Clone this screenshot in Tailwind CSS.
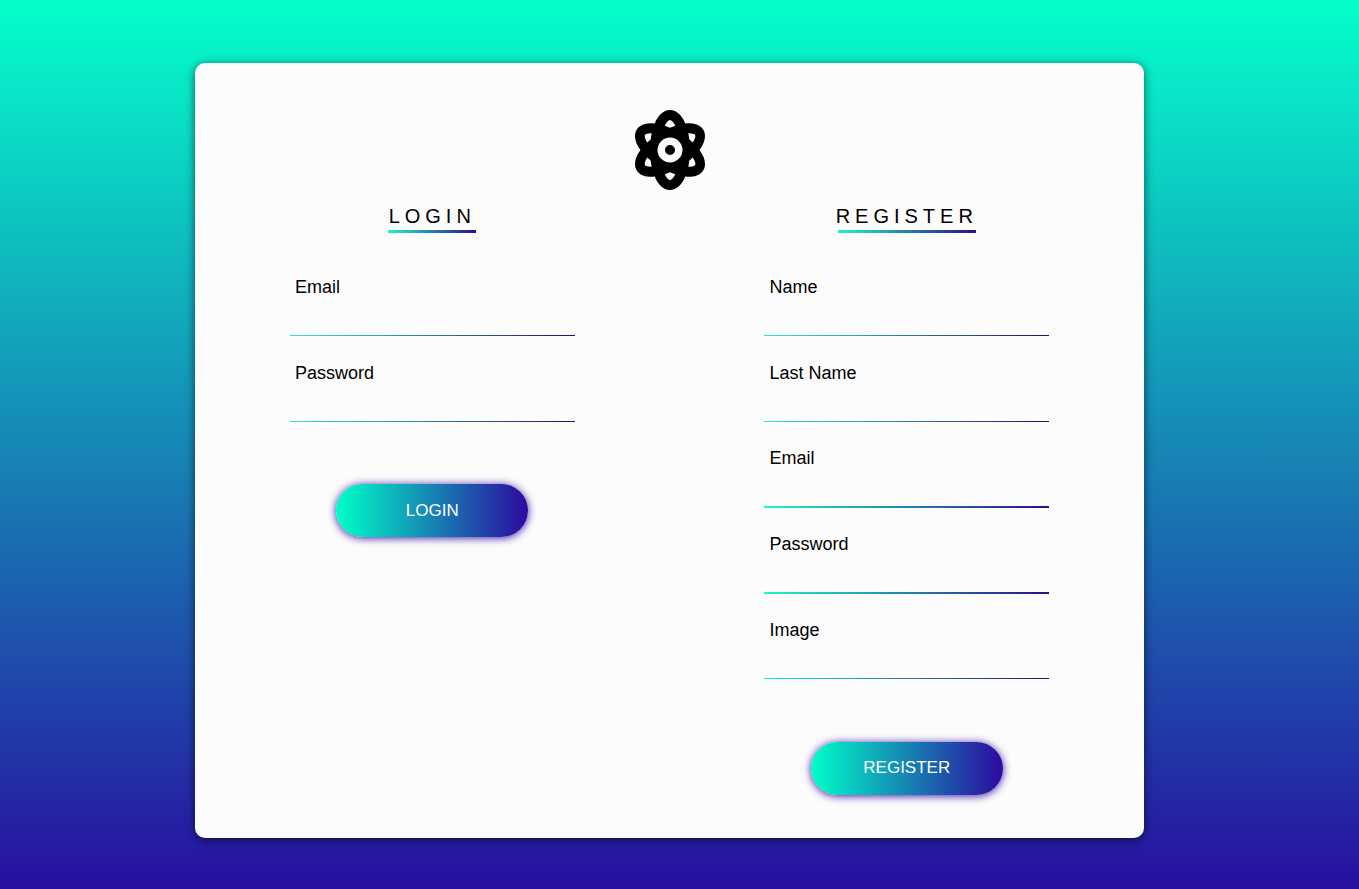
<!DOCTYPE html>
<html lang="en">
<head>
<meta charset="utf-8">
<meta name="viewport" content="width=device-width, initial-scale=1">
<title>Login and register</title>
<script src="https://cdn.jsdelivr.net/npm/@tailwindcss/browser@4"></script>
</head>
<body class="min-h-screen bg-linear-to-b/srgb from-[#05ffcb] to-[#270fa0] bg-no-repeat font-['Liberation_Sans',Arial,sans-serif] text-black">
<main class="pt-[63px] pr-5 pb-[51px]">
  <div class="mx-auto w-full max-w-[949px] rounded-[10px] bg-[#fcfcfc] pt-[47px] pb-[43px] shadow-[0_2px_10px_rgba(0,0,0,0.6)]">
    <svg class="mx-auto h-20 w-[70px]" viewBox="0 0 448 512" fill="currentColor" aria-hidden="true"><path d="M223.999 224a32 32 0 1 0 32.008 32A32.064 32.064 0 0 0 223.999 224Zm214.172-96c-10.877-19.5-40.51-50.75-116.275-41.875C300.392 34.875 267.634 0 223.999 0s-76.39 34.875-97.896 86.125C50.337 77.375 20.706 108.5 9.829 128-6.55 157.375-5.175 201.125 34.958 256-5.175 310.875-6.55 354.625 9.829 384c29.131 52.375 101.647 43.625 116.274 41.875C147.608 477.125 180.364 512 223.999 512s76.393-34.875 97.897-86.125c14.629 1.75 87.144 10.5 116.275-41.875C454.55 354.625 453.175 310.875 413.04 256 453.175 201.125 454.55 157.375 438.171 128ZM63.339 352c-4-7.25-.125-24.75 15.004-48.25 6.877 6.5 14.129 12.875 21.881 19.125 1.625 13.75 4 27.125 6.75 40.125C82.345 363.875 67.091 358.625 63.339 352Zm36.885-162.875c-7.752 6.25-15.004 12.625-21.881 19.125-15.129-23.5-19.004-41-15.004-48.25 3.377-6.125 16.379-11.5 37.885-11.5 1.75 0 3.875.375 5.75.375-2.875 13.375-5.125 26.75-6.75 40.25ZM223.999 64c9.502 0 22.256 13.5 33.883 37.25-11.252 3.75-22.504 8-33.883 12.875-11.377-4.875-22.629-9.125-33.883-12.875C201.745 77.5 214.497 64 223.999 64Zm0 384c-9.502 0-22.254-13.5-33.883-37.25 11.254-3.75 22.506-8 33.883-12.875 11.379 4.875 22.631 9.125 33.883 12.875C246.255 434.5 233.501 448 223.999 448Zm0-112a80 80 0 1 1 80-80A80 80 0 0 1 223.999 336Zm160.66 16c-3.625 6.625-19.004 11.875-43.635 11 2.752-13 5.127-26.375 6.752-40.125 7.752-6.25 15.004-12.625 21.879-19.125C384.784 327.25 388.659 344.75 384.659 352ZM369.655 208.25c-6.875-6.5-14.127-12.875-21.879-19.125-1.625-13.5-3.875-26.875-6.752-40.25 1.875 0 4.002-.375 5.752-.375 21.504 0 34.508 5.375 37.883 11.5C388.659 167.25 384.784 184.75 369.655 208.25Z"/></svg>

    <div class="grid grid-cols-2">
      <form class="mx-auto flex w-3/5 flex-col items-center pt-3.5">
        <h2 class="text-xl leading-6 tracking-[5px]">LOGIN</h2>
        <div class="mt-0.5 mb-[17px] h-[3px] w-[88px] bg-linear-to-r/srgb from-[#1ff5c8] to-[#2b0d8f]"></div>
        <div class="flex h-[86px] w-full flex-col pt-[26px]">
          <label for="login-email" class="pl-[5px] text-lg leading-[22px]">Email</label>
          <input id="login-email" type="email" class="w-full flex-1 bg-transparent px-[5px] outline-none">
          <div class="h-px bg-linear-to-r/srgb from-[#2fe6d2] to-[#2b0d6f]"></div>
        </div>
        <div class="flex h-[86px] w-full flex-col pt-[26px]">
          <label for="login-password" class="pl-[5px] text-lg leading-[22px]">Password</label>
          <input id="login-password" type="password" class="w-full flex-1 bg-transparent px-[5px] outline-none">
          <div class="h-px bg-linear-to-r/srgb from-[#2fe6d2] to-[#2b0d6f]"></div>
        </div>
        <button type="button" class="mt-[62px] h-[53px] w-48 rounded-full bg-linear-to-r/srgb from-[#00ffc8] to-[#2c0a9f] text-[17px] text-white shadow-[0_1px_8px_#3a12a5]">LOGIN</button>
      </form>

      <form class="mx-auto flex w-3/5 flex-col items-center pt-3.5">
        <h2 class="text-xl leading-6 tracking-[5px]">REGISTER</h2>
        <div class="mt-0.5 mb-[17px] h-[3px] w-[138px] bg-linear-to-r/srgb from-[#1ff5c8] to-[#2b0d8f]"></div>
        <div class="flex h-[86px] w-full flex-col pt-[26px]">
          <label for="name" class="pl-[5px] text-lg leading-[22px]">Name</label>
          <input id="name" type="text" class="w-full flex-1 bg-transparent px-[5px] outline-none">
          <div class="h-px bg-linear-to-r/srgb from-[#2fe6d2] to-[#2b0d6f]"></div>
        </div>
        <div class="flex h-[86px] w-full flex-col pt-[26px]">
          <label for="last-name" class="pl-[5px] text-lg leading-[22px]">Last Name</label>
          <input id="last-name" type="text" class="w-full flex-1 bg-transparent px-[5px] outline-none">
          <div class="h-px bg-linear-to-r/srgb from-[#2fe6d2] to-[#2b0d6f]"></div>
        </div>
        <div class="flex h-[86px] w-full flex-col pt-[25px]">
          <label for="email" class="pl-[5px] text-lg leading-[22px]">Email</label>
          <input id="email" type="email" class="w-full flex-1 bg-transparent px-[5px] outline-none">
          <div class="h-0.5 bg-linear-to-r/srgb from-[#1ff5c8] to-[#2b0d8f]"></div>
        </div>
        <div class="flex h-[86px] w-full flex-col pt-[25px]">
          <label for="password" class="pl-[5px] text-lg leading-[22px]">Password</label>
          <input id="password" type="password" class="w-full flex-1 bg-transparent px-[5px] outline-none">
          <div class="h-0.5 bg-linear-to-r/srgb from-[#1ff5c8] to-[#2b0d8f]"></div>
        </div>
        <div class="flex h-[85px] w-full flex-col pt-[25px]">
          <label for="image" class="pl-[5px] text-lg leading-[22px]">Image</label>
          <input id="image" type="file" class="min-h-0 w-full flex-1 opacity-0">
          <div class="h-px bg-linear-to-r/srgb from-[#1fe8c8] to-[#2b0d6f]"></div>
        </div>
        <button type="button" class="mt-[63px] h-[53px] w-48 rounded-full bg-linear-to-r/srgb from-[#00ffc8] to-[#2c0a9f] pb-0.5 text-[17px] text-white shadow-[0_1px_8px_#3a12a5]">REGISTER</button>
      </form>
    </div>
  </div>
</main>
</body>
</html>
